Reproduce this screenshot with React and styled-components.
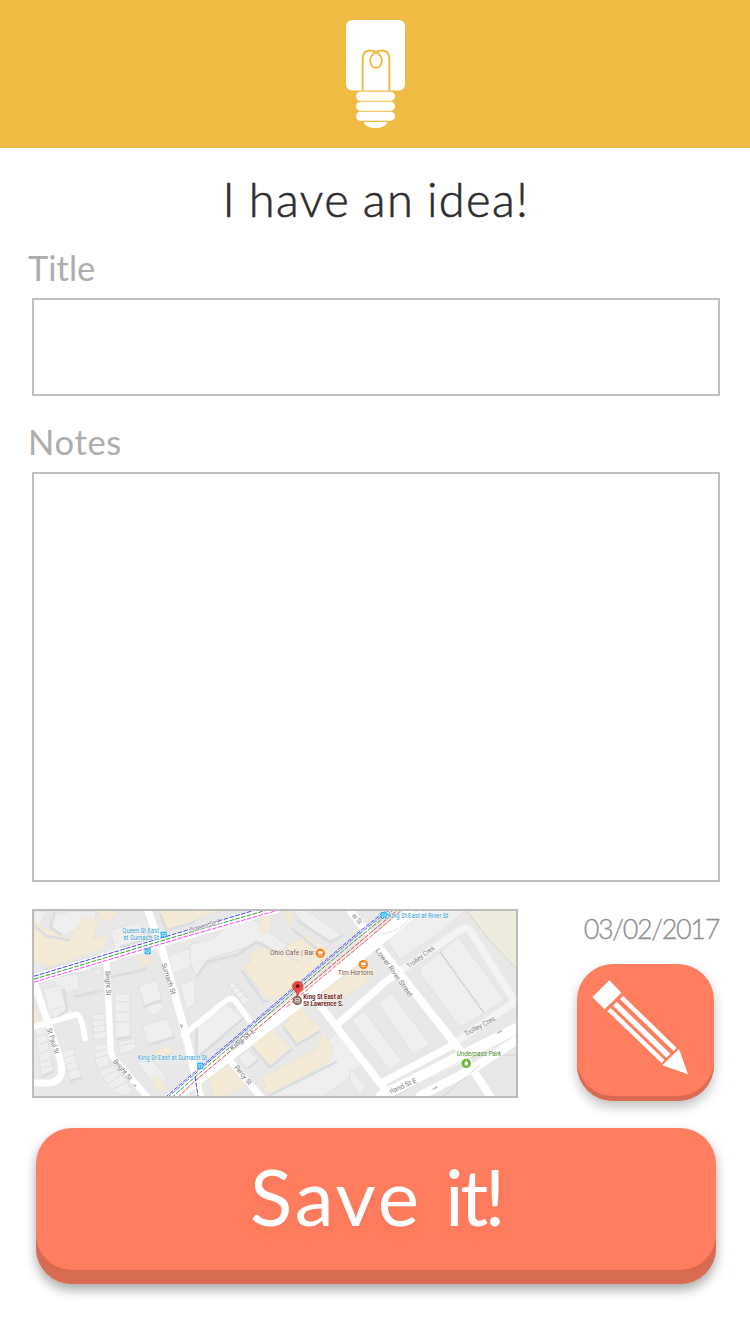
import React from "react";
import styled, { createGlobalStyle } from "styled-components";

const GlobalStyle = createGlobalStyle`
  *, *::before, *::after { box-sizing: border-box; }
  body { margin: 0; background: #fff; font-family: Lato, "Open Sans", sans-serif; }
`;

const Screen = styled.main`
  width: 750px;
  height: 1334px;
  display: flex;
  flex-direction: column;
  background: #fff;
  overflow: hidden;
`;

const Header = styled.header`
  flex: none;
  height: 148px;
  padding-top: 20px;
  display: flex;
  justify-content: center;
  background: #efbb43;
`;

const Form = styled.form`
  display: flex;
  flex-direction: column;
  padding: 0 30px 0 32px;
`;

const Heading = styled.h1`
  margin: 0;
  height: 96px;
  padding: 23px 0 0 0;
  font-size: 47px;
  font-weight: 300;
  line-height: 56px;
  letter-spacing: 1.4px;
  word-spacing: -1.5px;
  text-align: center;
  color: #2d2d2d;
  -webkit-text-stroke: 0.6px #2d2d2d;
`;

const Field = styled.div`
  display: flex;
  flex-direction: column;
  margin-bottom: ${(p) => p.$gap}px;
`;

const Label = styled.label`
  height: 54px;
  margin-left: -4px;
  font-size: 34.5px;
  line-height: 47px;
  letter-spacing: ${(p) => p.$tracking}px;
  color: #adadad;
`;

const box = `
  border: 2px solid #bfbfbf;
  border-radius: 0;
  background: #fff;
  outline: none;
  padding: 12px;
  font: 34px Lato, sans-serif;
  color: #2d2d2d;
`;
const TitleInput = styled.input`${box} height: 98px;`;
const NotesInput = styled.textarea`${box} height: 410px; resize: none; display: block;`;

const Details = styled.div`
  display: flex;
  justify-content: space-between;
  height: 220px;
`;

const MapFrame = styled.div`
  width: 486px;
  height: 189px;
  margin-top: 1px;
  border: 2px solid #bbb;
  overflow: hidden;
  svg { display: block; width: 100%; height: 100%; }
`;

const Side = styled.div`
  display: flex;
  flex-direction: column;
  align-items: flex-end;
`;

const DateText = styled.time`
  height: 56px;
  font-size: 27px;
  line-height: 41px;
  font-weight: 300;
  letter-spacing: -1.35px;
  margin-right: 1px;
  color: #8f8f8f;
  -webkit-text-stroke: 0.3px #8f8f8f;
`;

const Button = styled.button`
  display: flex;
  justify-content: center;
  border: 0;
  padding: 0;
  border-radius: 36px;
  background: #ff7e5f;
  color: #fff;
  font-family: inherit;
  box-shadow: inset 0 -${(p) => p.$depth}px 0 #d86b51, 0 6px 12px rgba(0, 0, 0, ${(p) => p.$shade});
`;

const SketchButton = styled(Button)`
  width: 137px;
  height: 137px;
  margin-right: 6px;
`;

const SaveButton = styled(Button)`
  width: 680px;
  height: 156px;
  margin-left: 4px;
  gap: 23px;
  font-size: 78px;
  line-height: 137px;
  text-shadow: 0 6px 10px rgba(200, 80, 50, 0.15);
`;

const Word = styled.span`
  letter-spacing: ${(p) => p.$tracking}px;
`;

const Bulb = () => (
  <svg width="60" height="109" viewBox="345 20 60 109" fill="#fff">
    <rect x="346" y="20" width="59" height="70.5" rx="6" />
    <path d="M362.7 91V59Q362.7 50.5 370 50.5C375 50.5 381.8 54.5 381.8 60.5C381.8 65 379 67.8 376 67.8S370.2 65 370.2 60.5C370.2 54.5 377 50.5 382 50.5Q389.3 50.5 389.3 59V91" fill="none" stroke="#efbb43" strokeWidth="1.9" />
    <rect x="356" y="91.7" width="39" height="9" rx="4.5" />
    <rect x="356" y="101.8" width="39" height="9" rx="4.5" />
    <rect x="356" y="111.8" width="39" height="9" rx="4.5" />
    <path d="M363.7 122H387.3C386 126 381.5 128 375.5 128S365 126 363.7 122Z" />
  </svg>
);

const Pencil = () => (
  <svg width="137" height="137" viewBox="0 0 411 411" fill="#fff">
    <path d="M97 49L133 86L83 136L46 99Z" />
    <path d="M138 95L299 252L290 262L129 105Z" />
    <path d="M119 113L280 269L268 281L108 125Z" />
    <path d="M101 132L262 287L254 298L91 141Z" />
    <path d="M306 255L333 331L256 304Z" />
  </svg>
);

const BUILDINGS = [
  "12,18 50,18 25,70 12,60", "60,30 120,18 200,18 190,60 100,90 70,70", "165,175 140,190 150,250 90,270 70,220 210,190 215,215",
  "40,250 90,240 110,310 60,340", "255,265 300,268 300,395 255,400", "240,75 330,50 350,110 260,150",
  "325,245 380,225 395,285 345,305", "350,300 400,292 402,310 375,332 352,320", "338,362 412,340 435,400 355,422",
  "185,330 222,325 230,400 192,402", "192,420 230,418 240,480 200,490", "205,500 250,480 310,560 280,573 250,560",
  "265,410 315,400 318,430 270,448", "95,440 130,430 155,525 125,535", "15,375 45,360 70,500 35,512",
  "60,315 120,300 130,325 75,345", "320,470 370,470 410,520 375,540", "415,150 495,125 495,180 430,205",
  "450,240 495,220 495,300 470,310", "480,120 560,95 590,50 660,35 770,120 740,145 700,110 540,160 500,210 480,170",
  "785,15 830,15 935,90 910,110 880,95 840,70", "500,360 590,300 650,345 500,460", "595,240 615,230 657,285 640,300",
  "625,460 655,432 684,465 650,490", "860,430 940,370 1000,470 940,530 880,573 720,573 700,550",
  "1068,100 1160,15 1305,15 1240,75 1110,163", "1170,190 1285,95 1425,285 1290,367 1170,205",
  "1045,295 1085,264 1200,417 1150,450", "965,345 1003,318 1115,467 1077,495", "960,490 1008,545 990,565 960,530",
];
const CREAM = [
  "12,45 45,70 120,100 160,35 205,50 190,100 235,90 220,130 60,185 12,165", "205,18 265,18 240,50 205,35",
  "390,18 495,18 495,45 410,80", "330,155 360,150 365,178 335,180", "12,290 32,360 12,360",
  "480,15 580,15 500,40", "692,20 720,15 720,80 692,85", "768,20 790,25 785,65 768,50",
  "660,150 710,120 840,190 795,245 740,280 665,200", "635,180 665,175 740,265 715,285", "765,125 830,90 905,145 840,200",
  "665,420 730,375 785,430 720,485", "760,360 810,305 875,375 800,418", "695,520 860,430 880,385 910,430 900,470 720,573",
  "535,510 600,482 650,540 590,573 550,573", "880,260 990,180 1042,195 1000,240 895,305", "372,438 422,422 430,442 378,460",
  "367,525 385,515 410,550 385,560",
];
const SHADE = [
  "M12 60L50 92L120 105M40 195L210 150M75 22L60 65L95 90", "M100 250L112 315L70 345M130 275L220 255M240 215L315 200L350 190",
  "M258 402L302 395M270 125L345 105L365 75", "M340 305L395 285M355 420L435 395M350 18L365 45",
  "M390 25L410 75L495 50", "M500 215L530 170L620 150L680 110L745 145", "M635 195L700 290L720 285",
  "M800 45L900 110L940 90M785 70L860 130", "M665 425L720 487L786 432M760 365L800 420L872 377M715 573L920 470",
  "M500 365L500 460L640 340M655 490L685 465", "M120 528L155 518M35 515L70 500",
];

const ROADS = [
  ["M395 605L480 538L975 160L1160 8", 38], ["M0 225L495 80L740 8", 30], ["M350 5L400 145L460 360L510 573", 23],
  ["M230 165L242 440Q245 455 260 470L350 573", 19], ["M12 230L90 460Q110 535 50 534H12", 21],
  ["M12 365L140 328Q155 330 165 400", 17], ["M460 390L590 285Q605 275 617 288L665 355", 17],
  ["M590 455L690 573", 20], ["M960 15L1290 435L1380 573", 24], ["M835 255L1080 573", 22],
  ["M920 360L1060 235L1110 198", 22], ["M1058 532L1260 425", 22],
  ["M1055 573L1460 370", 34], ["M1170 573L1330 490L1460 405", 27],
];

const LINES = [
  ["#3130ed", "M12 213L480 72L680 13"], ["#24902d", "M12 222L480 81L715 13"], ["#fa35ef", "M12 231L480 90L750 13"],
  ["#3f45df", "M405 578L480 513L975 90L1072 12"], ["#5a60e0", "M412 578L480 519L975 96L1081 12"],
  ["#319445", "M425 578L490 520L975 106L1092 12"], ["#ed3030", "M443 578L490 532L975 122L1105 12"],
  ["#ef6060", "M770 305L975 134L1118 12"], ["#3738b9", "M495 515L504 573"],
];

const LABELS = [
  [277, 84, 110, "Queen St East", "#2c9bd2", 0], [280, 104, 107, "at Sumach St", "#2c9bd2", 0],
  [323, 466, 208, "King St East at Sumach St", "#2c9bd2", 0], [1073, 39, 182, "King St East at River St", "#2c9bd2", 0],
  [720, 150, 133, "Ohio Cafe | Bar", "#77503e", 0], [924, 210, 106, "Tim Hortons", "#77503e", 0],
  [226, 198, 73, "Bright St", "#777", 88], [394, 176, 98, "Sumach St", "#777", 72],
  [50, 372, 80, "St Paul St", "#777", 72], [248, 470, 76, "Bright St", "#777", 50],
  [480, 82, 98, "Queen St E", "#777", -16], [606, 438, 92, "King St E", "#777", -39],
  [612, 487, 70, "Percy St", "#777", 51], [1036, 136, 174, "Lower River Street", "#777", 54],
  [1137, 190, 98, "Trolley Cres", "#777", -37], [1308, 394, 102, "Trolley Cres", "#777", -29],
  [1082, 566, 86, "rland St E", "#777", -23], [965, 32, 34, "er St", "#777", 50],
];

const LocationMap = () => (
  <svg viewBox="12 17 1446 556" preserveAspectRatio="none" fontFamily="Roboto, sans-serif" fontSize="21">
    <rect x="0" y="0" width="1470" height="590" fill="#e8e8e8" />
    <path d="M1305 10L1375 100L1458 190V10Z" fill="#eeebdf" />
    <g fill="#efefef" stroke="#dcdcdc" strokeWidth="2">{BUILDINGS.map((p) => <polygon key={p} points={p} />)}</g>
    <g fill="#f5ead6" stroke="#eadfc8" strokeWidth="1.5">{CREAM.map((p) => <polygon key={p} points={p} />)}</g>
    <g fill="none" stroke="#d9dde0" strokeWidth="8">{SHADE.map((d) => <path key={d} d={d} />)}</g>
    <path d="M186 347L223 342M188 365L225 360M190 383L228 378M194 440L232 432M196 460L235 450M216 520L260 495M230 538L275 510M245 555L290 530M268 422L316 413M98 460L135 450M103 480L140 470M109 500L146 490M18 395L50 385M23 420L55 410M28 445L60 435M34 470L65 460M35 490L70 480M260 290H300M258 320H300M256 350H302" stroke="#d6d6d6" strokeWidth="2" />
    <path d="M595 240L610 232L658 285L643 300ZM606 252L622 244M617 264L634 257M629 278L646 270" fill="#f1f1f1" stroke="#d6d6d6" strokeWidth="2" />
    <path d="M1100 205L1290 75Q1310 60 1325 82L1455 290L1250 430" fill="none" stroke="#f4f4f4" strokeWidth="22" />
    <g fill="none" stroke="#fff" strokeLinecap="round">
      {ROADS.map(([d, w]) => <path key={d} d={d} strokeWidth={w} />)}
    </g>
    <g fill="none" stroke="#b9b6a2" strokeWidth="2" strokeDasharray="5 3">
      <path d="M1308 15L1375 100L1458 190M1050 85Q1110 85 1160 15M1095 573L1280 475L1330 455M1240 573L1350 480M1420 450H1458" />
      <path d="M1230 140L1362 323" stroke="#c8c8c8" strokeWidth="5" />
    </g>
    <g fill="none" strokeWidth="2.8">
      {LINES.map(([c, d]) => <path key={d} d={d} stroke={c} strokeDasharray="14 4" />)}
    </g>
    <g>
      {LABELS.map(([x, y, w, text, color, angle]) => (
        <text key={`${x}-${y}`} transform={`translate(${x} ${y}) rotate(${angle})`} textLength={w} lengthAdjust="spacingAndGlyphs" fill={color} stroke="#fff" strokeWidth="2" paintOrder="stroke">{text}</text>
      ))}
    </g>
    <g fill="#751a20" fontWeight="700" stroke="#fff" strokeWidth="2" paintOrder="stroke">
      <text x="820" y="282" textLength="117" lengthAdjust="spacingAndGlyphs">King St East at</text>
      <text x="820" y="302" textLength="120" lengthAdjust="spacingAndGlyphs">St Lawrence S.</text>
    </g>
    <text x="1280" y="454" fill="#4d8f20" fontStyle="italic" textLength="134" lengthAdjust="spacingAndGlyphs">Underpass Park</text>
    {[[401, 88], [353, 138], [511, 482], [1061, 30]].map(([x, y]) => (
      <g key={x} transform={`translate(${x} ${y})`}>
        <rect x="-9" y="-9" width="18" height="18" rx="2" fill="#18aef5" />
        <path d="M-5 -4H5V3H-5ZM-4 6H-2M2 6H4" fill="none" stroke="#fff" strokeWidth="2" />
      </g>
    ))}
    {[[871, 144], [1000, 178]].map(([x, y]) => (
      <g key={x} transform={`translate(${x} ${y})`}>
        <circle r="14" fill="#f4851f" />
        <path d="M-6 -5H6V1H-6ZM-6 6H6" fill="#fff" stroke="#fff" strokeWidth="2" />
      </g>
    ))}
    <g transform="translate(1309 475)">
      <circle r="14" fill="#72b63b" />
      <path d="M0 -9L6 3H1V8H-1V3H-6Z" fill="#fff" stroke="#fff" />
    </g>
    <circle cx="802" cy="286" r="14" fill="#8d7068" />
    <path d="M796 280H808V291H796ZM798 286H806" fill="none" stroke="#fff" strokeWidth="2" />
    <path d="M803 274Q800 261 793 256C782 246 787 229 803 228C819 229 825 246 813 256Q806 261 803 274Z" fill="#e94b3f" stroke="#bd352f" strokeWidth="1.5" />
    <circle cx="803" cy="243" r="5.5" fill="#6a151b" />
    <path d="M450 356L459 360L454 373ZM308 537L320 541L315 547ZM1400 383L1414 375L1416 380L1402 386ZM1207 551L1221 543L1223 548L1209 554Z" fill="#aeb4c9" />
  </svg>
);

export default function App() {
  return (
    <>
      <GlobalStyle />
      <Screen>
        <Header><Bulb /></Header>
        <Form onSubmit={(e) => e.preventDefault()}>
          <Heading>I have an idea!</Heading>
          <Field $gap={22}>
            <Label htmlFor="title" $tracking={0}>Title</Label>
            <TitleInput id="title" />
          </Field>
          <Field $gap={26}>
            <Label htmlFor="notes" $tracking={0.7}>Notes</Label>
            <NotesInput id="notes" />
          </Field>
          <Details>
            <MapFrame><LocationMap /></MapFrame>
            <Side>
              <DateText>03/02/2017</DateText>
              <SketchButton type="button" aria-label="Sketch" $depth={5} $shade={0.24}><Pencil /></SketchButton>
            </Side>
          </Details>
          <SaveButton type="submit" $depth={14} $shade={0.34}>
            <Word $tracking={3}>Save</Word>
            <Word $tracking={-3.5}>it!</Word>
          </SaveButton>
        </Form>
      </Screen>
    </>
  );
}
